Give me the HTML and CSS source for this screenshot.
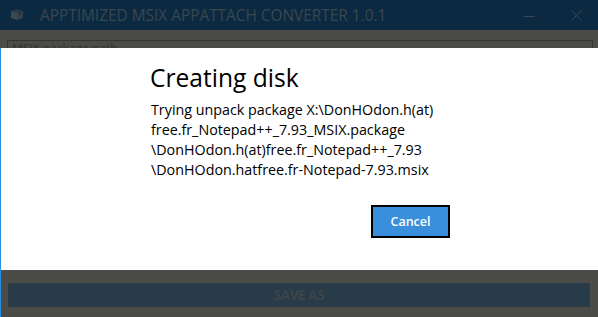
FILE: index.html
```html
<!DOCTYPE html>
<html>
<head>
<meta charset="utf-8">
<link rel="stylesheet" href="styles.css">
</head>
<body>
<div class="window">
  <header class="titlebar">
    <svg class="app-icon" width="14" height="13" viewBox="0 0 14 13">
      <path d="M1 3 L7 1 L13 3 L7 5 Z" fill="#2c3a44"/>
      <path d="M1 3 L7 5 L7 12 L1 10 Z" fill="#3b4953"/>
      <path d="M7 5 L13 3 L13 10 L7 12 Z" fill="#34424c"/>
      <path d="M9 4 L11 3.3 L11 7 L9 7.7 Z" fill="#23313b"/>
    </svg>
    <span class="title">APPTIMIZED MSIX APPATTACH CONVERTER 1.0.1</span>
    <span class="win-btn min">&#8212;</span>
    <svg class="win-btn close" width="11" height="11" viewBox="0 0 11 11">
      <path d="M0.5 0.5 L10.5 10.5 M10.5 0.5 L0.5 10.5" stroke="#3b4750" stroke-width="1"/>
    </svg>
  </header>
  <main class="content">
    <div class="field"><span class="field-label">MSIX package path</span></div>
    <div class="spacer"></div>
    <div class="save-bar"><span>SAVE AS</span></div>
  </main>
  <div class="edge"></div>
  <section class="dialog">
    <div class="dialog-inner">
      <h1 class="dialog-title">Creating disk</h1>
      <p class="dialog-text">Trying unpack package X:\DonHOdon.h(at)<br>free.fr_Notepad++_7.93_MSIX.package<br>\DonHOdon.h(at)free.fr_Notepad++_7.93<br>\DonHOdon.hatfree.fr-Notepad-7.93.msix</p>
      <div class="dialog-actions"><button class="cancel">Cancel</button></div>
    </div>
  </section>
</div>
</body>
</html>
```

FILE: styles.css
```css
html, body {
  margin: 0;
  padding: 0;
  width: 598px;
  height: 317px;
  overflow: hidden;
  background: #4b4c48;
}
.window {
  position: relative;
  width: 598px;
  height: 317px;
  display: flex;
  flex-direction: column;
  font-family: "Open Sans", "Noto Sans", sans-serif;
}
.titlebar {
  height: 30px;
  flex: none;
  background: #0b2a41;
  display: flex;
  align-items: center;
  padding-left: 10px;
  box-sizing: border-box;
}
.app-icon { flex: none; margin-top: -2px; }
.title {
  margin-left: 16px;
  color: #3a464f;
  font-size: 15.4px;
  white-space: nowrap;
}
.win-btn { color: #3b4750; }
.min {
  margin-left: auto;
  font-size: 12px;
  margin-right: 36px;
}
.close { margin-right: 16px; }
.content {
  flex: 1;
  display: flex;
  flex-direction: column;
  padding: 10px 5px 10px 7px;
}
.field {
  height: 22px;
  border: 1px solid #353633;
  padding: 1px 0 0 4px;
  box-sizing: border-box;
  color: #2f3236;
  font-size: 12px;
  line-height: 14px;
}
.spacer { flex: 1; }
.save-bar {
  height: 24px;
  margin-right: 3px;
  margin-left: 1px;
  background: #283b48;
  display: flex;
  align-items: center;
  justify-content: center;
  color: #3d444a;
  font-weight: 700;
  font-size: 13.5px;
  letter-spacing: -0.4px;
}
.edge {
  position: absolute;
  left: 0;
  top: 48px;
  bottom: 0;
  width: 1px;
  background: #2a90e2;
}
.dialog {
  position: absolute;
  left: 1px;
  right: 0;
  top: 48px;
  height: 222px;
  background: #ffffff;
}
.dialog-inner {
  width: 300px;
  margin-left: 149px;
  padding-top: 14px;
}
.dialog-title {
  margin: 0;
  font-weight: 400;
  font-size: 24.6px;
  line-height: 32px;
  color: #000;
}
.dialog-text {
  margin: 6px 0 0 1px;
  font-size: 14.3px;
  line-height: 20px;
  color: #000;
  white-space: nowrap;
}
.dialog-actions {
  display: flex;
  justify-content: flex-end;
  margin-top: 25px;
}
.cancel {
  width: 79px;
  height: 33px;
  background: #3a8fdc;
  border: 2px solid #000;
  color: #fff;
  font-family: "Open Sans", "Noto Sans", sans-serif;
  font-weight: 600;
  font-size: 12.5px;
  padding: 0;
}
```
